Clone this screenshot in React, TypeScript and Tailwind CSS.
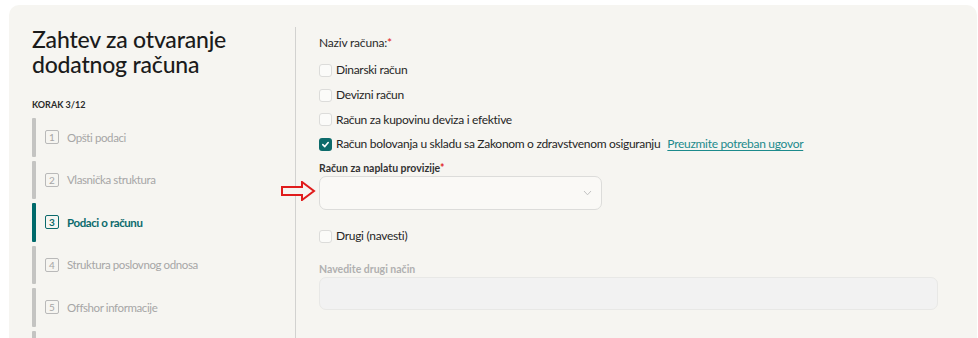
import React from "react";

const font = { fontFamily: "Lato, 'Noto Sans', sans-serif" };

function Box({ checked }: { checked?: boolean }) {
  if (checked) {
    return (
      <span className="flex h-[13px] w-[13px] shrink-0 items-center justify-center rounded-[3px] bg-[#0d6b6b]">
        <svg width="9" height="9" viewBox="0 0 10 10" fill="none">
          <path d="M2 5.2 L4.2 7.3 L8 2.8" stroke="#fff" strokeWidth="1.8" strokeLinecap="round" strokeLinejoin="round" />
        </svg>
      </span>
    );
  }
  return <span className="h-[13px] w-[13px] shrink-0 rounded-[3px] border border-[#dcdcda] bg-[#fbfbf9]" />;
}

function Row({ label, checked, extra }: { label: string; checked?: boolean; extra?: React.ReactNode }) {
  return (
    <div className="flex h-[24.7px] items-center gap-[4px] text-[12px] tracking-[-0.3px] text-[#262626]">
      <Box checked={checked} />
      <span>{label}</span>
      {extra}
    </div>
  );
}

const steps = [
  "Opšti podaci",
  "Vlasnička struktura",
  "Podaci o računu",
  "Struktura poslovnog odnosa",
  "Offshor informacije",
  "",
];

export default function App() {
  return (
    <div className="h-[338px] w-[978px] overflow-hidden bg-white" style={font}>
      <div className="ml-[9px] mr-[1px] mt-[5px] flex h-[400px] rounded-t-[10px] bg-[#f6f5f1]">
        <div className="w-[286px] shrink-0 pl-[23px] pt-[22px]">
          <h1 className="text-[23px] font-medium leading-[25px] tracking-[-0.2px] text-[#1b1b1b]">
            Zahtev za otvaranje
            <br />
            dodatnog računa
          </h1>
          <div className="mt-[21px] text-[9px] font-bold uppercase leading-[14px] text-[#2a2a2a]">KORAK 3/12</div>
          <div className="mt-[6px] flex flex-col gap-[4px]">
            {steps.map((s, i) => {
              const active = i === 2;
              return (
                <div key={i} className="flex h-[38.5px] items-center">
                  <div className={`h-full w-[4px] rounded-[1px] ${active ? "bg-[#006a6b]" : "bg-[#c4c4c2]"}`} />
                  {s && (
                    <>
                      <div
                        className={`ml-[9px] flex h-[14px] w-[14px] items-center justify-center rounded-[2px] text-[10px] leading-none ${
                          active ? "border-[1.5px] border-[#0b6a6c] font-bold text-[#0b6a6c]" : "border border-[#b9b9b9] text-[#a6a6a6]"
                        }`}
                      >
                        {i + 1}
                      </div>
                      <span
                        className={`ml-[8px] text-[11.5px] tracking-[-0.4px] ${active ? "font-bold text-[#0b6a6c]" : "text-[#a6a6a6]"}`}
                      >
                        {s}
                      </span>
                    </>
                  )}
                </div>
              );
            })}
          </div>
        </div>
        <div className="mt-[22px] w-px shrink-0 bg-[#d2d2d0]" />
        <div className="flex-1 pl-[23px] pt-[30px]">
          <div className="h-4 text-[12px] leading-4 tracking-[-0.2px] text-[#2a2a2a]">
            Naziv računa:<span className="text-[#e02020]">*</span>
          </div>
          <div className="mt-[7px] flex flex-col">
            <Row label="Dinarski račun" />
            <Row label="Devizni račun" />
            <Row label="Račun za kupovinu deviza i efektive" />
            <Row
              label="Račun bolovanja u skladu sa Zakonom o zdravstvenom osiguranju"
              checked
              extra={<a className="ml-[3px] text-[#1c8a8c] underline underline-offset-2">Preuzmite potreban ugovor</a>}
            />
          </div>
          <div className="mt-[4px] h-[14px] text-[10.5px] font-bold leading-[14px] text-[#333]">
            Račun za naplatu provizije<span className="text-[#e02020]">*</span>
          </div>
          <div className="relative mt-[1px] flex h-[34px] w-[283px] items-center justify-end rounded-[7px] border border-[#dcdcda] bg-[#faf9f6] pr-[9px]">
            <svg width="9" height="6" viewBox="0 0 9 6" fill="none">
              <path d="M1 1 L4.5 4.8 L8 1" stroke="#c2c2c2" strokeWidth="1" />
            </svg>
            <svg className="absolute left-[-39px] top-[4px]" width="35" height="20" viewBox="0 0 35 20" fill="none">
              <path d="M1 6 H21 V1 L33 10 L21 19 V14 H1 Z" stroke="#e01c1c" strokeWidth="2" fill="#f6f5f1" strokeLinejoin="miter" />
            </svg>
          </div>
          <div className="mt-[14px]">
            <Row label="Drugi (navesti)" />
          </div>
          <div className="mt-[14px] h-[14px] text-[10.5px] font-bold leading-[14px] text-[#b0b0b0]">Navedite drugi način</div>
          <div className="mt-[1px] h-[33px] w-[619px] rounded-[7px] border border-[#e8e8e6] bg-[#f2f2f2]" />
        </div>
      </div>
    </div>
  );
}
